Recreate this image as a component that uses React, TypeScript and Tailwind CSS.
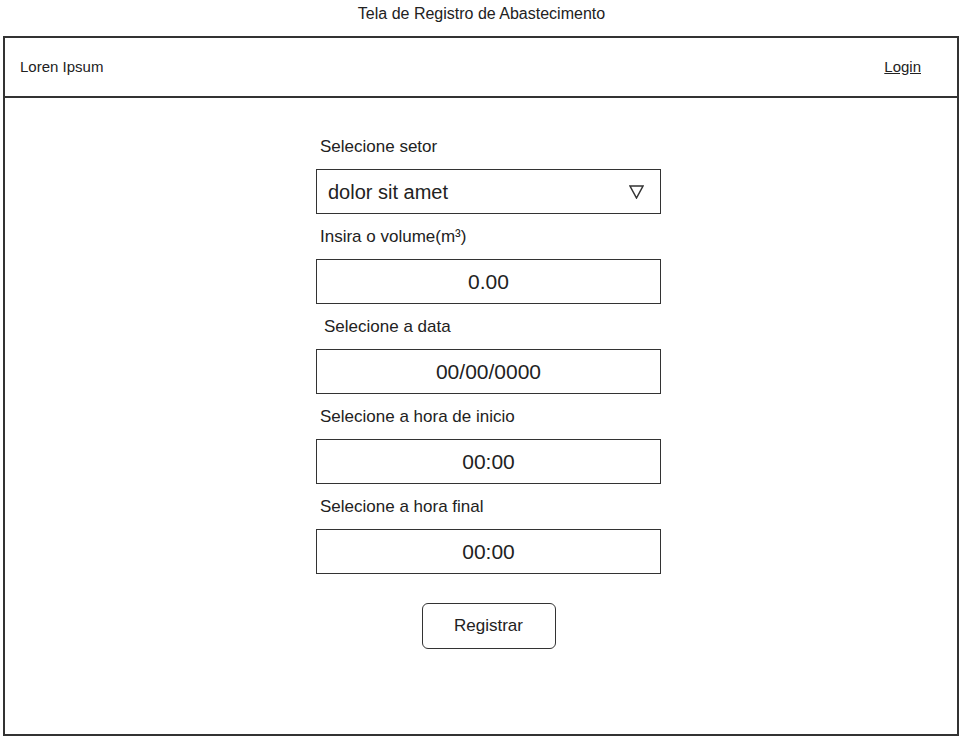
import React, { useState } from 'react';

const Field = ({
  label,
  value,
  indent = false,
}: {
  label: string;
  value: string;
  indent?: boolean;
}) => (
  <div className="flex flex-col">
    <p className={`h-5 text-[17px] leading-5 text-[#222] ${indent ? 'pl-2' : 'pl-1'}`}>
      {label}
    </p>
    <div className="mt-3 flex h-[45px] items-center justify-center border-[1.5px] border-[#333] text-[21px] text-[#222]">
      {value}
    </div>
  </div>
);

const App = () => {
  const [setor] = useState('dolor sit amet');

  return (
    <div className="h-[740px] w-[963px] bg-white font-['Liberation_Sans',Arial,sans-serif]">
      <h1 className="h-9 pt-[5px] text-center text-[16px] leading-[18px] text-[#222]">
        Tela de Registro de Abastecimento
      </h1>
      <div className="ml-[3px] flex h-[700px] w-[956px] flex-col border-2 border-[#333]">
        <div className="flex h-[60px] items-center justify-between border-b-2 border-[#333] pl-[15px] pr-9 text-[15px] text-[#222]">
          <span>Loren Ipsum</span>
          <a href="#" className="underline">
            Login
          </a>
        </div>

        <form className="ml-[311px] flex w-[345px] flex-col pt-[39px]">
          <div className="flex flex-col">
            <p className="h-5 pl-1 text-[17px] leading-5 text-[#222]">Selecione setor</p>
            <div className="mt-3 flex h-[45px] items-center justify-between border-[1.5px] border-[#333] pl-[11px] pr-[16px] text-[20px] text-[#222]">
              <span>{setor}</span>
              <svg width="15" height="14" viewBox="0 0 15 14">
                <path d="M1 1 L14 1 L7.5 13 Z" fill="none" stroke="#333" strokeWidth="1.5" strokeLinejoin="miter" />
              </svg>
            </div>
          </div>
          <div className="mt-[13px]">
            <Field label="Insira o volume(m³)" value="0.00" />
          </div>
          <div className="mt-[13px]">
            <Field label="Selecione a data" value="00/00/0000" indent />
          </div>
          <div className="mt-[13px]">
            <Field label="Selecione a hora de inicio" value="00:00" />
          </div>
          <div className="mt-[13px]">
            <Field label="Selecione a hora final" value="00:00" />
          </div>

          <button
            type="button"
            className="mx-auto mt-[29px] h-[46px] w-[134px] rounded-md border-[1.5px] border-[#333] text-[17px] text-[#222]"
          >
            Registrar
          </button>
        </form>
      </div>
    </div>
  );
};

export default App;
